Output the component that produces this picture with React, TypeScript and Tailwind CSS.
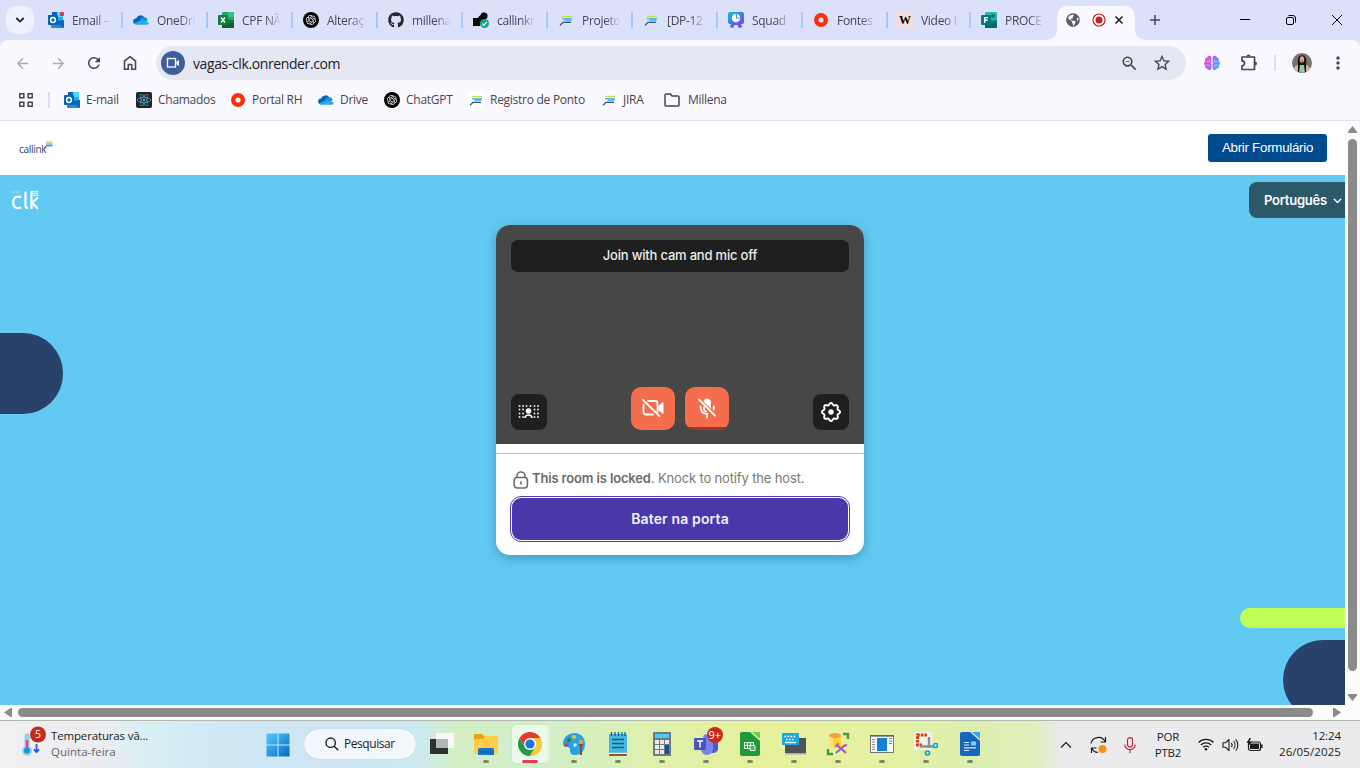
import type { ReactNode } from "react";
import { FaGithub, FaGlobeAmericas, FaReact } from "react-icons/fa";
import { RiOpenaiFill } from "react-icons/ri";
import { MdArrowBack, MdArrowForward, MdMoreVert, MdRefresh, MdStarBorder, MdZoomOut } from "react-icons/md";

/* ---------- small favicons ---------- */

const Outlook = ({ dot = false }: { dot?: boolean }) => (
  <svg width="16" height="16" viewBox="0 0 16 16" className="overflow-visible">
    <rect x="4" y="0" width="11" height="9" fill="#28a8ea" />
    <rect x="9" y="0" width="6" height="5" fill="#50d9ff" />
    <rect x="4" y="0" width="5" height="4" fill="#0364b8" />
    <path d="M3 8h13v7a1 1 0 0 1-1 1H4a1 1 0 0 1-1-1z" fill="#1490df" />
    <path d="M16 8v8L7 10z" fill="#1066b5" />
    <rect x="0" y="3" width="10" height="10" rx="1" fill="#0a62b8" />
    <circle cx="5" cy="8" r="2.4" fill="none" stroke="#fff" strokeWidth="1.5" />
    {dot && <circle cx="14" cy="2" r="2.2" fill="#e3343f" />}
  </svg>
);

const OneDrive = () => (
  <svg width="17" height="16" viewBox="0 0 17 16">
    <path d="M3 12.500a3 3 0 0 1 .3-6A4.900 4.900 0 0 1 12 5.200L9 12z" fill="#0364b8" />
    <path d="M12 5.200a3.600 3.600 0 0 1 3.500 3.200L9 12 7 7.500A5 5 0 0 1 12 5.200z" fill="#1490df" />
    <path d="M1 11.500 10 7.800l6.600 2.800A2 2 0 0 1 15 13H3.500A3 3 0 0 1 1 11.500z" fill="#28a8ea" />
  </svg>
);

const Excel = () => (
  <svg width="16" height="16" viewBox="0 0 16 16">
    <rect x="4" y="0" width="12" height="16" rx="1" fill="#21a366" />
    <rect x="10" y="0" width="6" height="5" fill="#33c481" />
    <path d="M4 8h12v7a1 1 0 0 1-1 1H5a1 1 0 0 1-1-1z" fill="#107c41" />
    <rect x="4" y="11" width="12" height="5" fill="#185c37" />
    <rect x="0" y="3" width="10" height="10" rx="1" fill="#107c41" />
    <path d="m3 5.500 4 5M7 5.500l-4 5" stroke="#fff" strokeWidth="1.500" />
  </svg>
);

const OpenAI = () => (
  <span className="flex size-4 items-center justify-center rounded-full bg-black text-white">
    <RiOpenaiFill size={12} />
  </span>
);

const Callink = () => (
  <svg width="16" height="16" viewBox="0 0 16 16">
    <path d="M4 4.500h10" stroke="#c6dc4b" strokeWidth="1.300" />
    <path d="M4 6.800h10M6.500 8.300h7" stroke="#5cbcf0" strokeWidth="1.400" />
    <path d="M2 13.200 5 10.300h8" fill="none" stroke="#3d4b7c" strokeWidth="1.300" />
  </svg>
);

const Knot = () => (
  <svg width="16" height="16" viewBox="0 0 16 16">
    <path d="M0 6h4.500L7.500 3A3.600 3.600 0 1 1 11 7.600L7 11v3H0z" fill="#0b0b0b" />
    <circle cx="11.500" cy="11.500" r="4.500" fill="#0fa388" />
    <path d="m9.300 11.600 1.600 1.600 3-3.300" fill="none" stroke="#fff" strokeWidth="1.300" />
  </svg>
);

const Board = () => (
  <svg width="16" height="16" viewBox="0 0 16 16">
    <defs>
      <linearGradient id="brd" x1="0" y1="0" x2="0.800" y2="1">
        <stop offset="0" stopColor="#12c4d6" />
        <stop offset="0.500" stopColor="#3d7be8" />
        <stop offset="1" stopColor="#8a35f0" />
      </linearGradient>
    </defs>
    <path d="M2 0h12a2 2 0 0 1 2 2v8a2 2 0 0 1-2 2h-1l1 3-3 1-1.500-3h-3L5 16l-3-1 1-3H2a2 2 0 0 1-2-2V2a2 2 0 0 1 2-2z" fill="url(#brd)" />
    <circle cx="8" cy="6" r="4.300" fill="#fff" />
    <path d="M8.500 1.500V6H13" fill="none" stroke="#4a8bea" strokeWidth="1.200" />
  </svg>
);

const Ring = () => (
  <svg width="16" height="16" viewBox="0 0 16 16">
    <circle cx="8" cy="8" r="4.800" fill="none" stroke="#ff2b0a" strokeWidth="4.400" />
  </svg>
);

const WIcon = () => (
  <span className="flex size-4 items-center justify-center bg-[#fadcd6] font-['Liberation_Serif',serif] text-[12px] leading-none font-bold text-black">
    W
  </span>
);

const Forms = () => (
  <svg width="16" height="16" viewBox="0 0 16 16">
    <rect x="4" y="0" width="12" height="16" rx="1" fill="#2ab5b5" />
    <path d="M4 10h12v5a1 1 0 0 1-1 1H4z" fill="#036c70" />
    <circle cx="12" cy="4" r="2" fill="#0c6a75" />
    <rect x="8" y="8" width="8" height="2" fill="#12858a" />
    <rect x="0" y="3" width="10" height="10" rx="1" fill="#07797e" />
    <path d="M3.700 11V5.600H7M3.700 8.300h3" fill="none" stroke="#fff" strokeWidth="1.400" />
  </svg>
);

/* ---------- browser chrome ---------- */

const tabs: { icon: ReactNode; title: string; box?: string }[] = [
  { icon: <Outlook dot />, title: "Email –" },
  { icon: <OneDrive />, title: "OneDri" },
  { icon: <Excel />, title: "CPF NÃ" },
  { icon: <OpenAI />, title: "Alteraç" },
  { icon: <FaGithub size={16} color="#24292f" />, title: "millena" },
  { icon: <Knot />, title: "callinkr" },
  { icon: <Callink />, title: "Projeto" },
  { icon: <Callink />, title: "[DP-12" },
  { icon: <Board />, title: "Squad -" },
  { icon: <Ring />, title: "Fontes" },
  { icon: <WIcon />, title: "Video I", box: "w-[83px] pl-[9px]" },
  { icon: <Forms />, title: "PROCE" },
];

const TabStrip = () => (
  <div className="flex h-10 bg-[#dae1f9] pl-1.5">
    <button className="mt-1.5 mr-1 flex size-7 shrink-0 items-center justify-center rounded-[10px] bg-[#edf1fd]">
      <svg width="10" height="8" viewBox="0 0 10 8">
        <path d="m1.300 2 3.700 3.600L8.700 2" fill="none" stroke="#1f2024" strokeWidth="1.800" />
      </svg>
    </button>
    {tabs.map((tab, i) => (
      <div key={tab.title} className={`flex shrink-0 items-center ${tab.box ?? "w-[85px] pl-2.5"}`}>
        <span className="flex w-4 shrink-0 justify-center">{tab.icon}</span>
        <span className="ml-2 w-[39px] pt-px text-[12px] tracking-[-0.3px] whitespace-nowrap text-[#43475a] [mask-image:linear-gradient(to_right,black_60%,transparent)]">
          {tab.title}
        </span>
        {i < tabs.length - 1 && <span className="ml-auto h-4 w-0.5 bg-[#a9c7fb]" />}
      </div>
    ))}
    <div className="relative mt-1.5 ml-px flex h-[34px] w-[78px] shrink-0 items-center rounded-t-[10px] bg-[#faf9ff] pb-1.5 pl-[9px]">
      <svg className="absolute bottom-0 -left-2.5" width="10" height="10">
        <path d="M10 0v10H0A10 10 0 0 0 10 0z" fill="#faf9ff" />
      </svg>
      <svg className="absolute -right-2.5 bottom-0" width="10" height="10">
        <path d="M0 0v10h10A10 10 0 0 1 0 0z" fill="#faf9ff" />
      </svg>
      <FaGlobeAmericas size={14} color="#5b5e66" />
      <svg className="ml-3" width="14" height="14" viewBox="0 0 14 14">
        <circle cx="7" cy="7" r="6" fill="none" stroke="#c5221f" strokeWidth="1.200" />
        <circle cx="7" cy="7" r="3.500" fill="#c5221f" />
      </svg>
      <svg className="ml-2" width="10" height="10" viewBox="0 0 10 10">
        <path d="m1.500 1.500 7 7M8.500 1.500l-7 7" stroke="#1f2024" strokeWidth="1.600" />
      </svg>
    </div>
    <svg className="mt-[15px] ml-[15px] shrink-0" width="10" height="10" viewBox="0 0 10 10">
      <path d="M5 0v10M0 5h10" stroke="#43475a" strokeWidth="1.500" />
    </svg>
    <div className="ml-auto flex items-center gap-9 pr-[18px]">
      <svg width="10" height="10">
        <path d="M0 4.500h10" stroke="#000" />
      </svg>
      <svg width="10" height="10" viewBox="0 0 10 10" fill="none" stroke="#000">
        <rect x="0.500" y="2.500" width="7" height="7" rx="1.500" />
        <path d="M2.500.5H7A2.500 2.500 0 0 1 9.500 3v4.500" />
      </svg>
      <svg width="10" height="10">
        <path d="m0 0 10 10M10 0 0 10" stroke="#000" />
      </svg>
    </div>
  </div>
);

const Slot = ({ children }: { children: ReactNode }) => (
  <span className="flex w-9 shrink-0 items-center justify-center">{children}</span>
);

const Toolbar = () => (
  <div className="flex h-[46px] items-center pl-1">
    <Slot><MdArrowBack size={17} color="#a9abb3" /></Slot>
    <Slot><MdArrowForward size={17} color="#a9abb3" /></Slot>
    <Slot><MdRefresh size={18} color="#43475a" /></Slot>
    <Slot>
      <svg width="14" height="16" viewBox="0 0 14 16" fill="none" stroke="#43475a" strokeWidth="1.600">
        <path d="M1.500 6 7 1.700 12.500 6v8.200H8.700V9.500H5.300v4.700H1.500z" />
      </svg>
    </Slot>
    <div className="ml-2 flex h-[34px] w-[1030px] items-center rounded-full bg-[#e5e8f3] pl-[5px]">
      <span className="flex size-6 items-center justify-center rounded-full bg-[#3d5f9d]">
        <svg width="14" height="12" viewBox="0 0 14 12" fill="none" stroke="#fff" strokeWidth="1.300">
          <rect x="1.500" y="1.500" width="8" height="8.500" />
          <path d="M10.500 5 12.500 3.500v5L10.500 7" fill="#fff" strokeWidth="0.800" />
        </svg>
      </span>
      <span className="ml-2 text-[14px] tracking-[-0.39px] text-[#1f2024]">vagas-clk.onrender.com</span>
      <MdZoomOut className="ml-auto" size={19} color="#43475a" />
      <MdStarBorder className="mr-3.5 ml-[13px]" size={20} color="#43475a" />
    </div>
    <svg className="ml-[18px]" width="16" height="16" viewBox="0 0 16 16">
      <defs>
        <linearGradient id="brain" x1="0" y1="0" x2="1" y2="0.300">
          <stop offset="0" stopColor="#ff5a9e" />
          <stop offset="0.500" stopColor="#b05cf5" />
          <stop offset="1" stopColor="#4aa8ff" />
        </linearGradient>
      </defs>
      <path d="M7.400 2A2.400 2.400 0 0 0 3 2.600 2.700 2.700 0 0 0 1.200 6a2.800 2.800 0 0 0 0 4.300 2.700 2.700 0 0 0 2 3.400A2.400 2.400 0 0 0 7.400 14zM8.600 2A2.400 2.400 0 0 1 13 2.600 2.700 2.700 0 0 1 14.800 6a2.800 2.800 0 0 1 0 4.300 2.700 2.700 0 0 1-2 3.400A2.400 2.400 0 0 1 8.600 14z" fill="url(#brain)" />
      <path d="M2.500 6.500h3v-2M2.500 10h2.800v2M13.500 6.500h-3v-2M13.500 10h-2.800v2M6 8h4" fill="none" stroke="#f3ecff" strokeWidth="0.500" />
    </svg>
    <svg className="ml-5" width="18" height="18" viewBox="0 0 18 18">
      <path d="M2 3h12.500v12.500H2v-3.700a2.500 2.500 0 0 0 0-5z" fill="none" stroke="#43475a" strokeWidth="1.700" strokeLinejoin="round" />
      <path d="M6.500 2.500a2 2 0 0 1 4 0zM15 7.500a2 2 0 0 1 0 4z" fill="#43475a" />
    </svg>
    <span className="ml-4 h-4 w-0.5 bg-[#d3e0fb]" />
    <svg className="ml-4 rounded-full" width="20" height="20" viewBox="0 0 20 20">
      <rect width="20" height="20" fill="#77746e" />
      <path d="M5.500 20 6 6c1-5 7-5 8 0l1 14z" fill="#15110f" />
      <path d="M1 20c0-6 3-8 5-8v8zM19 20c0-6-3-8-5-8v8z" fill="#dcae94" />
      <path d="M8 12h4l1 8H7z" fill="#92c9ac" />
      <ellipse cx="10" cy="6.500" rx="2.200" ry="3.200" fill="#d7a58d" />
      <path d="M9.500 8.300h1.500" stroke="#b22a30" strokeWidth="0.900" />
    </svg>
    <MdMoreVert className="ml-4" size={20} color="#43475a" />
  </div>
);

const bookmarks: { icon: ReactNode; label: string; box: string }[] = [
  { icon: <Outlook />, label: "E-mail", box: "w-[72px]" },
  {
    icon: (
      <span className="flex size-4 items-center justify-center rounded-[2px] bg-[#20232a] text-[#4fb4cb]">
        <FaReact size={14} />
      </span>
    ),
    label: "Chamados",
    box: "w-[94px]",
  },
  { icon: <Ring />, label: "Portal RH", box: "w-[88px]" },
  { icon: <OneDrive />, label: "Drive", box: "w-[66px]" },
  { icon: <OpenAI />, label: "ChatGPT", box: "w-[84px]" },
  { icon: <span className="bg-white"><Callink /></span>, label: "Registro de Ponto", box: "w-[133px]" },
  { icon: <Callink />, label: "JIRA", box: "w-[63px]" },
  {
    icon: (
      <svg width="16" height="14" viewBox="0 0 16 14">
        <path d="M1 2.500V12a1 1 0 0 0 1 1h12a1 1 0 0 0 1-1V4a1 1 0 0 0-1-1H8L6.500 1H2a1 1 0 0 0-1 1z" fill="none" stroke="#45464d" strokeWidth="1.500" />
      </svg>
    ),
    label: "Millena",
    box: "w-[80px] gap-0.5",
  },
];

const Bookmarks = () => (
  <div className="flex h-[35px] items-center border-b border-[#dfe1ee] pb-[6px] pl-[19px]">
    <svg width="14" height="14" viewBox="0 0 14 14" fill="none" stroke="#45464d" strokeWidth="1.500">
      <path d="M.8.8h4v4h-4zM9.200.8h4v4h-4zM.8 9.200h4v4h-4zM9.200 9.200h4v4h-4z" />
    </svg>
    <span className="mr-3.5 ml-[15px] h-4 w-0.5 bg-[#d3e0fb]" />
    {bookmarks.map((b) => (
      <div key={b.label} className={`flex shrink-0 items-center ${b.box}`}>
        <span className="flex w-4 shrink-0 justify-center">{b.icon}</span>
        <span className="ml-1.5 text-[12px] tracking-[-0.27px] whitespace-nowrap text-[#45464d]">{b.label}</span>
      </div>
    ))}
  </div>
);

/* ---------- page ---------- */

const CamOff = () => (
  <svg width="24" height="20" viewBox="0 0 24 20" fill="none" stroke="#fff" strokeWidth="1.800" strokeLinecap="round">
    <path d="M7 3h7a2.500 2.500 0 0 1 2.500 2.500v8.500M12 16.500H5A2.500 2.500 0 0 1 2.500 14V6.500" />
    <path d="m17.500 8.500 4.500-4v11l-4.500-4z" fill="#fff" strokeWidth="1" strokeLinejoin="round" />
    <path d="m2 1.800 16.500 16.400" />
  </svg>
);

const MicOff = () => (
  <svg width="20" height="22" viewBox="0 0 20 22" fill="none" stroke="#fff" strokeWidth="1.800" strokeLinecap="round">
    <path d="M6.500 4.500a3.800 3.800 0 0 1 7.400 0v7.300L6.500 4.500z" fill="#fff" stroke="none" />
    <path d="M10 20.500v-3.500M3.500 9.500c0 5 3 7.500 7 7.500M16.700 9.500v3M7 10.500v1.500c0 1 .8 2 2 2.500" />
    <path d="m2 2.500 16 16.200" />
  </svg>
);

const Blur = () => (
  <svg width="22" height="16" viewBox="0 0 22 16" fill="#fff">
    {[1.500, 5, 8.500, 12.500, 16.500, 20].map((x) =>
      [2, 5.500, 9.500, 13].map((y) =>
        x > 6 && x < 15 && y > 3 ? null : <rect key={`${x}-${y}`} x={x - 0.8} y={y - 0.8} width="1.600" height="1.600" />,
      ),
    )}
    <circle cx="10.500" cy="7" r="2.800" />
    <path d="M7 14c.3-4 6.700-4 7 0" fill="none" stroke="#fff" strokeWidth="1.700" />
  </svg>
);

/* eight soft lobes around the hub */
const gearPoints = Array.from({ length: 96 }, (_, i) => {
  const a = (i / 96) * Math.PI * 2;
  const r = 8.1 + 0.95 * Math.cos(8 * a);
  return `${(11 + r * Math.sin(a)).toFixed(2)},${(11 - r * Math.cos(a)).toFixed(2)}`;
}).join(" ");

const Gear = () => (
  <svg width="22" height="22" viewBox="0 0 22 22">
    <polygon points={gearPoints} fill="none" stroke="#fff" strokeWidth="1.900" strokeLinejoin="round" />
    <circle cx="11" cy="11" r="2.700" fill="#fff" />
  </svg>
);

const JoinCard = () => (
  <div className="h-[330px] w-[368px] overflow-hidden rounded-[14px] bg-white font-['Inter',sans-serif]">
    <div className="flex h-[219px] flex-col justify-between bg-[#474747] px-[15px] pt-[15px] pb-3.5">
      <div className="flex h-8 items-center justify-center rounded-[7px] bg-[#1f1f1f] text-[13px] font-medium tracking-[-0.2px] text-[#ececec]">
        Join with cam and mic off
      </div>
      <div className="flex items-end justify-between">
        <button className="flex size-9 items-center justify-center rounded-lg bg-[#1f1f1f]"><Blur /></button>
        <div className="flex gap-2.5">
          <button className="flex h-[43px] w-11 items-center justify-center rounded-[10px] bg-[#f46d4c] pb-0.5"><CamOff /></button>
          <button className="flex h-[43px] w-11 items-center justify-center overflow-hidden rounded-[10px] bg-[linear-gradient(to_top,#a5351f_3px,#f46d4c_3px)] pb-0.5"><MicOff /></button>
        </div>
        <button className="flex size-9 items-center justify-center rounded-lg bg-[#1f1f1f]"><Gear /></button>
      </div>
    </div>
    <div className="mt-[9px] border-t border-[#bdbdbd] px-3.5 pt-4">
      <p className="flex h-[18px] items-center pl-0.5 text-[13px] tracking-[-0.15px] whitespace-nowrap text-[#777]">
        <svg className="mt-0.5 mr-[3px] ml-px shrink-0" width="16" height="18" viewBox="0 0 16 18" fill="none" stroke="#6b6b6b" strokeWidth="1.600">
          <path d="M4 7V5a4 4 0 0 1 8 0v2" />
          <rect x="1.200" y="6.500" width="13.200" height="10.500" rx="3" />
          <path d="M8 10.200v3.200" />
        </svg>
        <span><b className="font-semibold text-[#6b6b6b]">This room is locked</b>. Knock to notify the host.</span>
      </p>
      <button className="mt-2 flex h-[46px] w-full rounded-[11px] border border-[#4a3ec9] p-px">
        <span className="flex h-full w-full items-center justify-center rounded-[9px] bg-[#4a38a8] pb-0.5 text-[14px] font-semibold tracking-[0.14px] text-[#f1effb]">
          Bater na porta
        </span>
      </button>
    </div>
  </div>
);

const Page = () => (
  <div className="w-[1345px] shrink-0 overflow-hidden">
    <header className="flex h-[54px] items-center justify-between bg-white pr-[18px] pl-[19px]">
      <div className="flex items-center font-['Noto_Sans',sans-serif] text-[10px] tracking-[-0.35px] text-[#3f5279]">
        <span className="mt-0.5">callink</span>
        <svg className="-mt-1.5 -ml-[3px]" width="10" height="8" viewBox="0 0 10 8" fill="none">
          <path d="M3 1h6.500" stroke="#cbd86b" strokeWidth="1.300" />
          <path d="M3 3h6.500" stroke="#64bfe9" strokeWidth="1.500" />
          <path d="M1 7.500 3 4.800h6.500" stroke="#3f5279" />
        </svg>
      </div>
      <button className="h-7 w-[119px] rounded-[3px] bg-[#004a8f] font-['Liberation_Sans',sans-serif] text-[13.333px] tracking-[-0.27px] text-white">Abrir Formulário</button>
    </header>
    <main className="relative h-[530px] overflow-hidden bg-[#62caf2]">
      <div className="absolute top-[158px] left-0 h-[81px] w-[63px] rounded-r-[40px] bg-[#28426b]" />
      <div className="absolute top-[432.500px] right-0 h-5 w-[105.500px] rounded-l-full bg-[#bfff56]" />
      <div className="absolute top-[465px] right-0 h-[65px] w-[62px] overflow-hidden">
        <div className="h-20 w-[100px] rounded-l-[40px] bg-[#28426b]" />
      </div>
      <div className="flex h-[50px] justify-between pt-[7px] pl-3">
        <svg className="mt-2" width="28" height="21" viewBox="0 0 28 21" fill="none" stroke="#fff" strokeWidth="2.200">
          <path d="M9.300 7.200C4 5.200 1.200 8 1.200 12.500s3 7 8.100 5M13.500 1.500V15q0 3 2.500 3.200M19.500 1v18" />
          <path d="M26 7.500 20 12.700l6 6" />
          <path d="M0 2.200h8" strokeWidth="1.200" strokeDasharray="1.200 .8" opacity=".55" />
          <path d="M20 1.500h6.500M20 3.500h6.500M21 5.400h5.500" strokeWidth="1.400" opacity=".65" />
        </svg>
        <button className="flex h-9 w-24 items-center rounded-l-lg bg-[#2b5969] pt-px pl-[15px] font-['Inter',sans-serif] text-[13px] font-semibold tracking-[-0.25px] text-white">
          Português
          <svg className="ml-1.5" width="9" height="6" viewBox="0 0 9 6">
            <path d="m.8.8 3.700 3.700L8.200.8" fill="none" stroke="#fff" strokeWidth="1.300" />
          </svg>
        </button>
      </div>
      <div className="ml-[496px] w-[368px] rounded-[14px] shadow-[0_3px_12px_rgba(20,60,85,0.35)]">
        <JoinCard />
      </div>
    </main>
  </div>
);

/* ---------- taskbar ---------- */

const Chrome = () => (
  <svg width="24" height="24" viewBox="0 0 48 48">
    <path d="M24 12h20.800A24 24 0 0 0 3.200 12l10.400 18z" fill="#e33b2e" />
    <path d="M13.600 30 3.200 12A24 24 0 0 0 24 48l10.400-18z" fill="#229a48" />
    <path d="M34.400 30 24 48a24 24 0 0 0 20.800-36H24z" fill="#fcc934" />
    <circle cx="24" cy="24" r="12" fill="#fff" />
    <circle cx="24" cy="24" r="9.200" fill="#1a73e8" />
  </svg>
);

const apps: { name: string; icon: ReactNode; active?: boolean }[] = [
  {
    name: "files",
    icon: (
      <svg width="24" height="24" viewBox="0 0 24 24">
        <path d="M0 3a1 1 0 0 1 1-1h7l2 2h13a1 1 0 0 1 1 1v16a1 1 0 0 1-1 1H0z" fill="#e8a317" />
        <path d="M0 7h9l2-3h12a1 1 0 0 1 1 1v17H0z" fill="#ffcd4a" />
        <path d="M4 18a2 2 0 0 1 2-2h12a2 2 0 0 1 2 2v5H4z" fill="#1473c9" />
        <path d="M7 20h10" stroke="#0b57a3" />
      </svg>
    ),
  },
  { name: "chrome", icon: <Chrome />, active: true },
  {
    name: "paint",
    icon: (
      <svg width="24" height="24" viewBox="0 0 24 24">
        <path d="M13 1C5 1 1 6 1 12c0 2 1 3 3 3 3 0 4 0 4 3 0 3 1 5 5 5 7 0 10-5 10-11S19 1 13 1z" fill="#24a3e6" />
        <circle cx="7" cy="8" r="2" fill="#2d7d36" />
        <circle cx="12" cy="5" r="2" fill="#f8c22e" />
        <circle cx="4.500" cy="12.500" r="2" fill="#e0402f" />
        <circle cx="13" cy="13" r="1.800" fill="#e5f4fd" />
        <path d="M17 8h4v6h-1v9h-2v-9h-1z" fill="#8b4d21" />
        <path d="M17 8h4v4h-4z" fill="#d9a05c" />
      </svg>
    ),
  },
  {
    name: "notepad",
    icon: (
      <svg width="24" height="24" viewBox="0 0 24 24">
        <rect x="3" y="2" width="18" height="20" rx="1" fill="#42b8e4" />
        <path d="M5.500 0v4M9 0v4M12.500 0v4M16 0v4M19 0v4" stroke="#14607e" strokeWidth="1.300" />
        <path d="M6 7.500h12M6 11.500h12M6 15.500h12" stroke="#14607e" strokeWidth="1.400" />
        <path d="M3 22h18v2H3z" fill="#98532a" />
        <path d="M3 21.300h18" stroke="#fff" />
      </svg>
    ),
  },
  {
    name: "calculator",
    icon: (
      <svg width="20" height="24" viewBox="0 0 20 24">
        <rect x="1" width="18" height="24" rx="1" fill="#707780" />
        <rect x="3" y="2" width="14" height="4" fill="#48c9f6" />
        <path d="M3 8h4v4H3zM8 8h4v4H8zM13 8h4v4h-4zM3 13h4v4H3zM8 13h4v4H8zM3 18h4v4H3zM8 18h4v4H8z" fill="#e6e8ea" />
        <path d="M13 13h4v9h-4z" fill="#174f91" />
      </svg>
    ),
  },
  {
    name: "teams",
    icon: (
      <svg width="24" height="24" viewBox="0 0 24 24" className="overflow-visible">
        <circle cx="13" cy="6" r="4" fill="#7b83eb" />
        <circle cx="21" cy="8" r="2.500" fill="#5059c9" />
        <path d="M16 9h8v8a5 5 0 0 1-8 3z" fill="#5059c9" />
        <path d="M7 9h12v8a6 6 0 0 1-12 0z" fill="#7b83eb" />
        <rect x="0" y="6" width="12" height="12" rx="1" fill="#4b53bc" />
        <path d="M3 9h6M6 9v6.500" stroke="#fff" strokeWidth="1.500" />
        <circle cx="21" cy="3" r="8" fill="#c42b1c" />
        <text x="20.800" y="7" textAnchor="middle" fontSize="11" fill="#fff" fontFamily="Open Sans">9+</text>
      </svg>
    ),
  },
  {
    name: "spreadsheet",
    icon: (
      <svg width="20" height="24" viewBox="0 0 20 24">
        <path d="M2 0h12l6 6v16a2 2 0 0 1-2 2H2a2 2 0 0 1-2-2V2a2 2 0 0 1 2-2z" fill="#20993a" />
        <path d="M12 0h8v9z" fill="#65cf45" />
        <path d="m11 0 9 8" stroke="#dff1b8" strokeWidth="1.500" />
        <path d="M4.500 10.500h9v6h-9zM4.500 13.500h9M7.500 10.500v6M10.500 10.500v6" fill="none" stroke="#eaf8e6" strokeWidth="1.100" />
        <path d="M10 13.500h5v5h-5z" fill="#4bb75f" stroke="#eaf8e6" />
      </svg>
    ),
  },
  {
    name: "remote",
    icon: (
      <svg width="26" height="24" viewBox="0 0 26 24">
        <rect x="4" y="6" width="21" height="16" fill="#4e5359" />
        <path d="M4 21h21v1.500H4z" fill="#a9adb1" />
        <rect x="1" y="1" width="17" height="12" rx="1" fill="#1aa9dc" />
        <path d="M3.500 4.500h12M5 7.500h9" stroke="#fff" strokeWidth="1.400" strokeDasharray="1.600 1.400" />
        <path d="M4 10.500h11" stroke="#fff" strokeWidth="1.300" />
      </svg>
    ),
  },
  {
    name: "database",
    icon: (
      <svg width="24" height="24" viewBox="0 0 24 24" fill="none">
        <path d="M3 4v10c0 2.500 12 2.500 12 0V4z" fill="#fbd02b" />
        <path d="M3 4v10c0 1 2 1.700 4 1.900V4z" fill="#fde16d" />
        <ellipse cx="9" cy="3.500" rx="6" ry="2.500" fill="#f3a04a" />
        <path d="M17 2h5v5M2 17v5h5" stroke="#459944" strokeWidth="2.400" />
        <path d="m10 21 9-8M11 13l9 8" stroke="#a257bd" strokeWidth="2" />
        <path d="M9.500 14.500l3-3M18 14.500l3-2" stroke="#a257bd" strokeWidth="1.800" />
      </svg>
    ),
  },
  {
    name: "reader",
    icon: (
      <svg width="24" height="20" viewBox="0 0 24 20">
        <rect x="0.500" y="1.500" width="23" height="17" fill="#f7f7f7" stroke="#777" />
        <path d="M0 2h24" stroke="#555" strokeWidth="1.200" />
        <rect x="7" y="4" width="10" height="13" fill="#1280d3" />
        <path d="M2 5.500h3M2 8h3M2 10.500h3M2 13h3M2 15.500h3M19 4.500h3M19 7h3M19 9.500h3" stroke="#858585" />
      </svg>
    ),
  },
  {
    name: "snip",
    icon: (
      <svg width="24" height="24" viewBox="0 0 24 24" fill="none">
        <rect x="0" y="0" width="18" height="18" rx="2" fill="#f2f2f3" />
        <path d="M13 3H3.500v10H8" stroke="#d83b01" strokeWidth="3" strokeDasharray="2.600 1" />
        <path d="M15 5v11M6 14.500h13" stroke="#8b8d90" strokeWidth="2.400" />
        <circle cx="21.500" cy="13.500" r="2" stroke="#1a9fe0" strokeWidth="1.700" />
        <circle cx="13.500" cy="21" r="2" stroke="#1a9fe0" strokeWidth="1.700" />
      </svg>
    ),
  },
  {
    name: "writer",
    icon: (
      <svg width="20" height="24" viewBox="0 0 20 24">
        <path d="M2 0h12l6 6v16a2 2 0 0 1-2 2H2a2 2 0 0 1-2-2V2a2 2 0 0 1 2-2z" fill="#1467bd" />
        <path d="M12 0h8v9z" fill="#36a6ea" />
        <path d="m11 0 9 8" stroke="#cfe9b8" strokeWidth="1.500" />
        <path d="M4 10.500h5M4 13h5M4 15.800h12M4 18.500h5" stroke="#d9ebfb" strokeWidth="1.200" />
        <rect x="11" y="9.500" width="5" height="4" fill="#8cc8f2" />
      </svg>
    ),
  },
];

const Taskbar = () => (
  <div className="flex h-12 items-stretch border-t border-[#b4b8b0] bg-[linear-gradient(to_right,#f0eff1_0px,#ecedf0_105px,#d8f0f3_145px,#d0e9f4_200px,#cfe5f5_340px,#cce9f0_420px,#d3eec4_455px,#d0efcc_530px,#dcf0b0_640px,#e6f09c_740px,#e6f1a0_860px,#dcefb0_980px,#ddefbe_1035px,#ebebed_1062px,#ebebee_1360px)] font-['Open_Sans',sans-serif]">
    <div className="flex w-[264px] items-center pl-[21px]">
      <svg className="-mt-1 shrink-0 overflow-visible" width="24" height="30" viewBox="0 0 24 30">
        <path d="M3.500 8a2.600 2.600 0 0 1 5.200 0v10.500a5 5 0 1 1-5.200 0z" fill="#96cdf3" />
        <path d="M6 12v11" stroke="#e1466e" strokeWidth="2.400" />
        <circle cx="6" cy="22.500" r="3" fill="#1793df" />
        <path d="M15.500 16v8m-2.600-2.700 2.600 2.800 2.600-2.800" fill="none" stroke="#2759e6" strokeWidth="1.800" />
        <circle cx="17" cy="6.500" r="8" fill="#c42b1c" />
        <text x="17" y="10.300" textAnchor="middle" fontSize="10.500" fill="#fff" fontFamily="Open Sans">5</text>
      </svg>
      <div className="-mt-0.5 ml-1.5 text-[11.500px] leading-4 whitespace-nowrap">
        <div className="tracking-[-0.15px] text-[#1c1c1c]">Temperaturas vã...</div>
        <div className="tracking-[0.02px] text-[#61646a]">Quinta-feira</div>
      </div>
    </div>
    <div className="flex w-10 items-center pl-[1.500px]">
      <svg width="24" height="24" viewBox="0 0 24 24">
        <defs>
          <linearGradient id="win" x1="0" y1="0" x2="1" y2="1">
            <stop offset="0" stopColor="#4fcdf8" />
            <stop offset="1" stopColor="#0568c8" />
          </linearGradient>
        </defs>
        <path d="M.5 1A.5.5 0 0 1 1 .5h10.500v11H.5zM12.500.5H23a.5.5 0 0 1 .5.5v10.500h-11zM.5 12.500h11v11H1a.5.5 0 0 1-.5-.5zM12.500 12.500h11V23a.5.5 0 0 1-.5.5H12.500z" fill="url(#win)" />
      </svg>
    </div>
    <div className="flex items-center">
      <div className="-mt-px flex h-[30px] w-28 items-center rounded-full bg-[#f1f7fb] pl-[21px] text-[12px] tracking-[-0.45px] text-[#1c1c1c] shadow-[0_0_1px_rgba(0,0,0,0.25)]">
        <svg className="mr-[5px]" width="14" height="14" viewBox="0 0 14 14" fill="none" stroke="#1c1c1c" strokeWidth="1.400">
          <circle cx="5.700" cy="5.700" r="4.700" />
          <path d="m9.200 9.200 4 4" />
        </svg>
        Pesquisar
      </div>
      <svg className="-mt-0.5 ml-3.5" width="24" height="24" viewBox="0 0 24 24">
        <rect x="0" y="7" width="18" height="15" fill="#2f3030" />
        <rect x="6" y="1" width="18" height="15" fill="#f8f8f8" />
        <rect x="6" y="7" width="12" height="9" fill="#b5b6b6" />
      </svg>
    </div>
    <div className="ml-2.5 flex">
      {apps.map((app) => (
        <div key={app.name} className="flex w-11 flex-col items-center pt-1">
          <div
            className={
              app.active
                ? "flex h-[38px] w-9 flex-col items-center rounded bg-white/60 pt-[7px] shadow-[2px_0_0_rgba(255,255,255,0.4),0_0_1px_rgba(0,0,0,0.3)]"
                : "flex h-[38px] w-9 flex-col items-center pt-[7px]"
            }
          >
            <span className="flex h-6 shrink-0 items-center">{app.icon}</span>
            <span className={app.active ? "mt-1 h-[3px] w-4 shrink-0 rounded-full bg-[#e04057]" : "mt-1 h-[3px] w-1.5 shrink-0 rounded-full bg-[#7f8768]"} />
          </div>
        </div>
      ))}
    </div>
    <div className="ml-auto flex items-center pr-[19px] text-[#1c1c1c]">
      <span className="flex w-8 justify-center">
        <svg width="12" height="8" viewBox="0 0 12 8"><path d="m1 6.500 5-5 5 5" fill="none" stroke="#1c1c1c" strokeWidth="1.200" /></svg>
      </span>
      <span className="flex w-8 justify-center">
        <svg width="17" height="18" viewBox="0 0 17 18" fill="none" stroke="#1c1c1c" strokeWidth="1.200">
          <path d="M1 7.500a7.500 7.500 0 0 1 14-2M15.500 1v5h-5M1.500 17v-5h5M2 12.500a7 7 0 0 0 6 4" />
          <circle cx="12.500" cy="13" r="4" fill="#f7930d" stroke="none" />
        </svg>
      </span>
      <span className="flex w-8 justify-center">
        <svg width="12" height="16" viewBox="0 0 12 16" fill="none" stroke="#c42438" strokeWidth="1.200">
          <rect x="3.500" y="0.600" width="5" height="9.500" rx="2.500" />
          <path d="M.8 7.500a5.200 5.200 0 0 0 10.400 0M6 12.700V16" />
        </svg>
      </span>
      <span className="mr-1 w-11 text-center text-[11.500px] leading-4 tracking-[-0.2px]">POR<br />PTB2</span>
      <span className="flex w-6 justify-center">
        <svg width="16" height="13" viewBox="0 0 16 13" fill="none" stroke="#1c1c1c" strokeWidth="1.200">
          <path d="M.5 4.500a10.600 10.600 0 0 1 15 0M2.800 7a7.400 7.400 0 0 1 10.400 0M5 9.300a4.200 4.200 0 0 1 6 0" />
          <circle cx="8" cy="11.300" r="1.300" fill="#1c1c1c" stroke="none" />
        </svg>
      </span>
      <span className="flex w-6 justify-center">
        <svg width="17" height="14" viewBox="0 0 17 14" fill="none" stroke="#1c1c1c" strokeWidth="1.100">
          <path d="M1 4.800h2.500L7 1.500v11L3.500 9.200H1z" strokeLinejoin="round" />
          <path d="M9.300 5a3 3 0 0 1 0 4M11.500 3a6 6 0 0 1 0 8M13.700 1.300a8.600 8.600 0 0 1 0 11.400" />
        </svg>
      </span>
      <span className="flex w-6 justify-center">
        <svg width="17" height="14" viewBox="0 0 17 14" fill="none">
          <rect x="2.500" y="4" width="12" height="8.500" rx="2" stroke="#1c1c1c" strokeWidth="1.200" />
          <rect x="4" y="5.500" width="9" height="5.500" fill="#1c1c1c" />
          <path d="M15.800 6.500v3.500" stroke="#1c1c1c" strokeWidth="1.500" />
          <path d="M3.500 0 .5 5h2L2 8.500 6 3.500H3.500L5 0z" fill="#1c1c1c" />
        </svg>
      </span>
      <span className="-mt-0.5 w-[75px] text-right text-[11.500px] leading-4 whitespace-nowrap">
        <span className="tracking-[-0.1px]">12:24</span>
        <br />
        <span className="tracking-[0.1px]">26/05/2025</span>
      </span>
    </div>
  </div>
);

export default function App() {
  return (
    <div className="flex h-[768px] w-[1360px] flex-col overflow-hidden bg-[#dae1f9] font-['Open_Sans',sans-serif]">
      <TabStrip />
      <div className="h-[81px] shrink-0 rounded-t-[8px] bg-[#faf9ff]">
        <Toolbar />
        <Bookmarks />
      </div>
      <div className="flex h-[584px] shrink-0 bg-[#fcfcfc]">
        <Page />
        <div className="flex w-[15px] flex-col items-center pt-[5px] pb-1">
          <svg width="9" height="8"><path d="M4.500 0 9 5.500V7H0V5.500z" fill="#8b8b8b" /></svg>
          <div className="mt-[5px] h-[532px] w-[9px] rounded-full bg-[#8b8b8b]" />
          <svg className="mt-auto" width="9" height="7"><path d="M0 0h9v1.500L4.500 7 0 1.500z" fill="#8b8b8b" /></svg>
        </div>
      </div>
      <div className="flex h-[15px] shrink-0 items-center bg-[#fcfcfc] pl-1">
        <svg width="8" height="9"><path d="M8 0v9H6.500L0 4.500 6.500 0z" fill="#8b8b8b" /></svg>
        <div className="ml-1.5 h-[9px] w-[1295px] rounded-full bg-[#8b8b8b]" />
        <svg className="mr-[19px] ml-auto" width="8" height="9"><path d="M0 0h1.500L8 4.500 1.500 9H0z" fill="#8b8b8b" /></svg>
      </div>
      <Taskbar />
    </div>
  );
}
